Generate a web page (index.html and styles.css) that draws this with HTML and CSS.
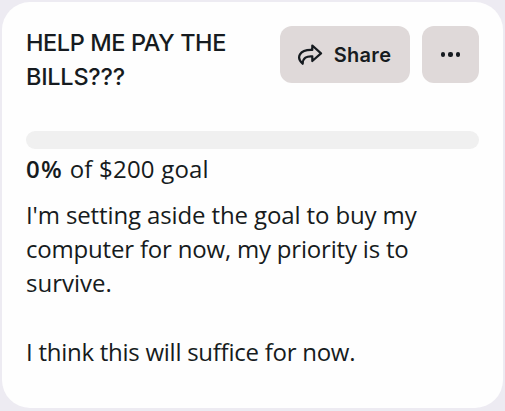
FILE: index.html
```html
<!DOCTYPE html>
<html lang="en">
<head>
    <meta charset="UTF-8">
    <meta name="viewport" content="width=device-width, initial-scale=1.0">
    <title>Goal</title>
    <link rel="stylesheet" href="styles.css">
</head>
<body>
    <div class="goal-card">
        <div class="goal-header">
            <h2><span class="title-start">HELP ME PAY THE</span> <span class="title-end">BILLS???</span></h2>
            <div class="actions">
                <button class="btn share-btn">
                    <svg width="26" height="24" viewBox="0 0 26 24" fill="none" stroke="#161b20" stroke-width="2.2" stroke-linejoin="round">
                        <path d="M15.3 2.5 L24 10.4 L15.3 18 V13.4 C9.5 13 5.9 14.8 5.7 20.8 C-1.2 14.5 2.2 6.5 15.3 7 Z"/>
                    </svg>
                    <span>Share</span>
                </button>
                <button class="btn more-btn" aria-label="More">
                    <i></i><i></i><i></i>
                </button>
            </div>
        </div>

        <div class="progress"></div>
        <p class="amount"><strong>0%</strong> of $200 goal</p>

        <div class="description">
            <p><span class="line-1">I'm setting aside the goal to buy my</span><br><span class="line-2">computer for now, my priority is to</span><br><span class="line-3">survive.</span></p>
            <p><span class="line-4">I think this will suffice for now.</span></p>
        </div>
    </div>
</body>
</html>
```

FILE: styles.css
```css
* {
    margin: 0;
    padding: 0;
    box-sizing: border-box;
}

body {
    background-color: #edebf2;
    padding: 2px 2px 3px;
    font-family: 'Open Sans', sans-serif;
    color: #161b20;
}

.goal-card {
    background-color: #fefefe;
    border-radius: 28px;
    height: 406px;
    padding: 24px;
}

.goal-header {
    display: flex;
    justify-content: space-between;
    align-items: flex-start;
    height: 105px;
}

h2 {
    width: 215px;
    font-family: Inter, sans-serif;
    font-size: 23.5px;
    font-weight: 550;
    line-height: 34px;
}

.title-start {
    letter-spacing: -0.4px;
}

.title-end {
    letter-spacing: -0.25px;
}

.actions {
    display: flex;
    gap: 12px;
}

.btn {
    display: flex;
    align-items: center;
    justify-content: center;
    height: 57px;
    border: none;
    border-radius: 12px;
    background-color: #dfd9d9;
    color: #161b20;
    font-family: Inter, sans-serif;
    font-size: 20px;
    font-weight: 600;
}

.share-btn {
    width: 130px;
    gap: 11px;
    letter-spacing: 0.3px;
}

.share-btn svg {
    margin-left: -2px;
}

.more-btn {
    width: 57px;
    gap: 3.5px;
}

.more-btn i {
    width: 4.2px;
    height: 4.2px;
    border-radius: 50%;
    background-color: #161b20;
}

.progress {
    height: 18px;
    border-radius: 9px;
    background-color: #f0f0f0;
}

.amount {
    margin-top: 3px;
    font-size: 24px;
    line-height: 34px;
    letter-spacing: 0.2px;
}

.amount strong {
    font-weight: 600;
    letter-spacing: 1.4px;
}

.description {
    margin-top: 12px;
    font-size: 24px;
    line-height: 34.2px;
}

.description p + p {
    margin-top: 34px;
}

.line-1 {
    letter-spacing: -0.12px;
}

.line-2 {
    letter-spacing: -0.19px;
}

.line-4 {
    letter-spacing: -0.26px;
}
```
